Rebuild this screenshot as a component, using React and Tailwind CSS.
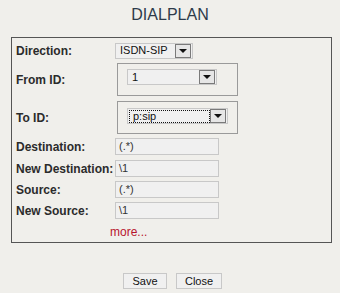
import React from "react";

const Arrow = () => (
  <span className="flex h-[14px] w-[16px] items-center justify-center border border-[#7a7a7a] bg-[#e6e6e6]">
    <svg width="8" height="4" viewBox="0 0 8 4">
      <polygon points="0,0 8,0 4,4" fill="#111" />
    </svg>
  </span>
);

const Select = ({ value, width, focus }) => (
  <div
    className="flex h-[16px] items-center justify-between border border-[#c8c8c8] bg-[#f0f0f0] pl-[1px] pr-[1px]"
    style={{ width }}
  >
    <span
      className={
        "flex h-[13px] flex-1 items-center pl-[3px] text-[11px] leading-none text-[#111] " +
        (focus ? "border border-dotted border-[#111]" : "")
      }
    >
      {value}
    </span>
    <Arrow />
  </div>
);

const Field = ({ value }) => (
  <div className="flex h-[17px] w-[104px] items-center border border-[#c8c8c8] bg-[#f0f0f0] pl-[3px] text-[11px] leading-none text-[#333]">
    {value}
  </div>
);

const Label = ({ children }) => (
  <div className="w-[99px] shrink-0 text-[12px] font-bold leading-[16px] text-[#2b2b2b]">{children}</div>
);

export default function App() {
  const fields = [
    ["Destination:", "(.*)", "mt-[4px]"],
    ["New Destination:", "\\1", "mt-[5px]"],
    ["Source:", "(.*)", "mt-[4px]"],
    ["New Source:", "\\1", "mt-[4px]"],
  ];
  return (
    <div
      className="h-[293px] w-[340px] bg-[#f0efeb]"
      style={{ fontFamily: '"Liberation Sans", Arial, sans-serif' }}
    >
      <div className="pt-[5px] text-center text-[16px] leading-[19px] text-[#2d3a4a]">DIALPLAN</div>
      <div className="ml-[11px] mt-[13px] h-[206px] w-[321px] border border-[#555] pl-[4px] pt-[4px]">
        <div className="flex h-[17px] items-center">
          <Label>Direction:</Label>
          <Select value="ISDN-SIP" width={78} />
        </div>
        <div className="mt-[4px] flex items-center">
          <Label>From ID:</Label>
          <div className="ml-[2px] h-[33px] w-[121px] border border-[#9a9a9a] pl-[9px] pt-[5px]">
            <Select value="1" width={90} />
          </div>
        </div>
        <div className="mt-[5px] flex items-center">
          <Label>To ID:</Label>
          <div className="ml-[2px] h-[33px] w-[121px] border border-[#9a9a9a] pl-[9px] pt-[6px]">
            <Select value="p:sip" width={101} focus />
          </div>
        </div>
        {fields.map(([l, v, m]) => (
          <div key={l} className={"flex items-center " + m}>
            <Label>{l}</Label>
            <Field value={v} />
          </div>
        ))}
        <div className="mt-[6px] pl-[94px] text-[12px] leading-[14px] text-[#b8152e]">more...</div>
      </div>
      <div className="mt-[30px] flex justify-center gap-[9px] pl-[5px]">
        <button className="h-[16px] w-[44px] border border-[#c8c8c8] bg-[#f0f0f0] text-[11px] leading-none text-[#111]">
          Save
        </button>
        <button className="h-[16px] w-[46px] border border-[#c8c8c8] bg-[#f0f0f0] text-[11px] leading-none text-[#111]">
          Close
        </button>
      </div>
    </div>
  );
}
